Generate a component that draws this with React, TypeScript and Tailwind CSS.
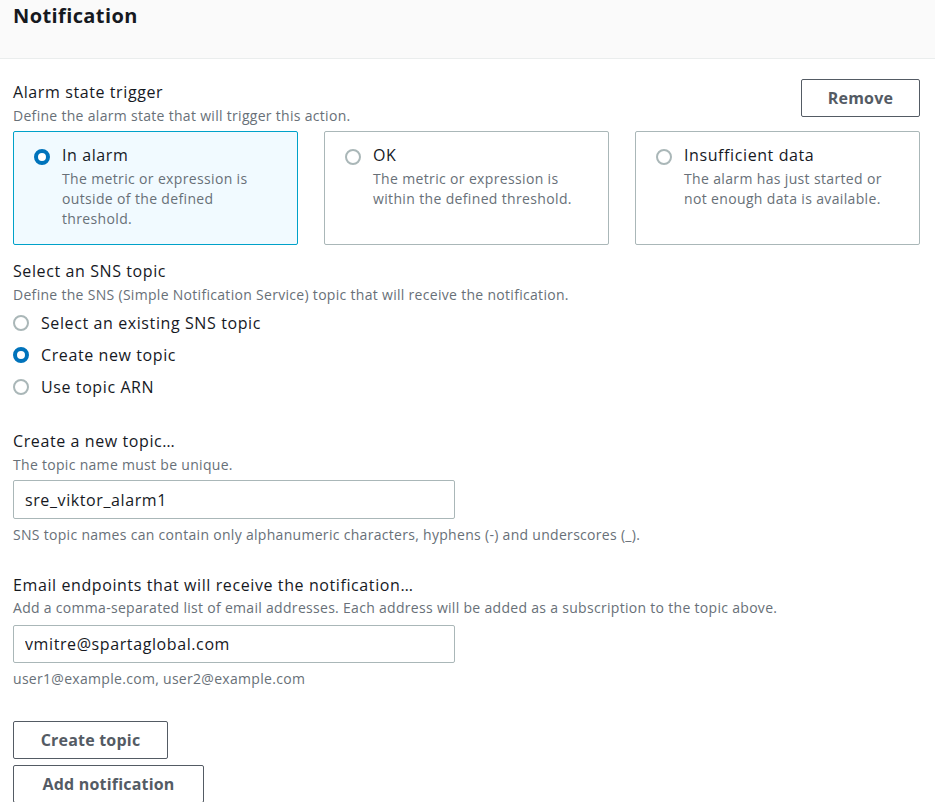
import { useState } from "react";

const font = { fontFamily: "'Open Sans', 'Noto Sans', Arial, sans-serif" };

function Radio({ checked }: { checked: boolean }) {
    return checked ? (
        <span className="inline-block w-4 h-4 rounded-full border-[4px] border-[#0073bb] bg-white shrink-0" />
    ) : (
        <span className="inline-block w-4 h-4 rounded-full border-2 border-[#aab7b8] bg-white shrink-0" />
    );
}

const states = [
    { id: "alarm", label: "In alarm", desc: "The metric or expression is outside of the defined threshold." },
    { id: "ok", label: "OK", desc: "The metric or expression is within the defined threshold." },
    { id: "insufficient", label: "Insufficient data", desc: "The alarm has just started or not enough data is available." },
];

const topicModes = ["Select an existing SNS topic", "Create new topic", "Use topic ARN"];

export default function App() {
    const [state, setState] = useState("alarm");
    const [mode, setMode] = useState(1);

    return (
        <main className="bg-white text-[#16191f] min-h-screen" style={font}>
            {/* Header */}
            <div className="bg-[#fafafa] border-b border-[#eaeded] h-[59px] px-[13px] pt-[2px]">
                <h2 className="text-[20px] font-bold leading-[28px] tracking-[0.4px]">Notification</h2>
            </div>

            <div className="pl-[13px] pr-[15px] pt-[22px]">
                {/* Alarm state trigger */}
                <div className="flex justify-between items-start">
                    <div>
                        <div className="text-[16px] leading-[22px] tracking-[0.6px]">Alarm state trigger</div>
                        <div className="text-[14px] leading-[20px] tracking-[0.3px] text-[#687078] mt-[3px]">Define the alarm state that will trigger this action.</div>
                    </div>
                    <button className="w-[119px] h-[38px] -mt-[2px] border border-[#545b64] rounded-[2px] text-[16px] font-bold tracking-[0.2px] text-[#545b64]">
                        Remove
                    </button>
                </div>

                <div className="grid grid-cols-3 gap-[26px] mt-[5px]">
                    {states.map((s) => {
                        const on = state === s.id;
                        return (
                            <div
                                key={s.id}
                                onClick={() => setState(s.id)}
                                className={
                                    on
                                        ? "h-[114px] border border-[#00a1c9] bg-[#f1faff] rounded-[2px] pl-[20px] pr-[26px] pt-[12px] flex gap-[12px] cursor-pointer"
                                        : "h-[114px] border border-[#aab7b8] bg-white rounded-[2px] pl-[20px] pr-[26px] pt-[12px] flex gap-[12px] cursor-pointer"
                                }
                            >
                                <div className="pt-[3px]"><Radio checked={on} /></div>
                                <div>
                                    <div className="text-[16px] leading-[22px] tracking-[0.6px]">{s.label}</div>
                                    <div className="text-[14px] leading-[20px] tracking-[0.35px] text-[#687078] mt-[3px]">{s.desc}</div>
                                </div>
                            </div>
                        );
                    })}
                </div>

                {/* SNS topic */}
                <div className="mt-[15px]">
                    <div className="text-[16px] leading-[22px] tracking-[0.6px]">Select an SNS topic</div>
                    <div className="text-[14px] leading-[20px] tracking-[0.3px] text-[#687078] mt-[3px]">Define the SNS (Simple Notification Service) topic that will receive the notification.</div>
                    <div className="flex flex-col mt-[2px]">
                        {topicModes.map((m, i) => (
                            <label key={m} onClick={() => setMode(i)} className="flex items-center gap-[12px] h-[32px] cursor-pointer">
                                <Radio checked={mode === i} />
                                <span className="text-[16px] tracking-[0.6px]">{m}</span>
                            </label>
                        ))}
                    </div>
                </div>

                {/* New topic */}
                <div className="mt-[27px]">
                    <div className="text-[16px] leading-[22px] tracking-[0.6px]">Create a new topic…</div>
                    <div className="text-[14px] leading-[20px] tracking-[0.3px] text-[#687078] mt-[3px]">The topic name must be unique.</div>
                    <input
                        defaultValue="sre_viktor_alarm1"
                        className="block mt-[5px] w-[442px] h-[39px] border border-[#aab7b8] rounded-[2px] px-[11px] text-[16px] tracking-[0.6px] outline-none"
                    />
                    <div className="text-[14px] leading-[20px] tracking-[0.3px] text-[#687078] mt-[6px]">
                        SNS topic names can contain only alphanumeric characters, hyphens (-) and underscores (_).
                    </div>
                </div>

                {/* Email endpoints */}
                <div className="mt-[29px]">
                    <div className="text-[16px] leading-[22px] tracking-[0.6px]">Email endpoints that will receive the notification…</div>
                    <div className="text-[14px] leading-[20px] tracking-[0.3px] text-[#687078] mt-[2px]">Add a comma-separated list of email addresses. Each address will be added as a subscription to the topic above.</div>
                    <input
                        defaultValue="vmitre@spartaglobal.com"
                        className="block mt-[7px] w-[442px] h-[38px] border border-[#aab7b8] rounded-[2px] px-[11px] text-[16px] tracking-[0.6px] outline-none"
                    />
                    <div className="text-[14px] leading-[20px] tracking-[0.3px] text-[#687078] mt-[6px]">user1@example.com, user2@example.com</div>
                </div>

                {/* Actions */}
                <div className="flex flex-col items-start gap-[6px] mt-[32px]">
                    <button className="w-[155px] h-[38px] border border-[#545b64] rounded-[2px] text-[16px] font-bold tracking-[0.2px] text-[#545b64]">
                        Create topic
                    </button>
                    <button className="w-[191px] h-[38px] border border-[#545b64] rounded-[2px] text-[16px] font-bold tracking-[0.2px] text-[#545b64]">
                        Add notification
                    </button>
                </div>
            </div>
        </main>
    );
}
